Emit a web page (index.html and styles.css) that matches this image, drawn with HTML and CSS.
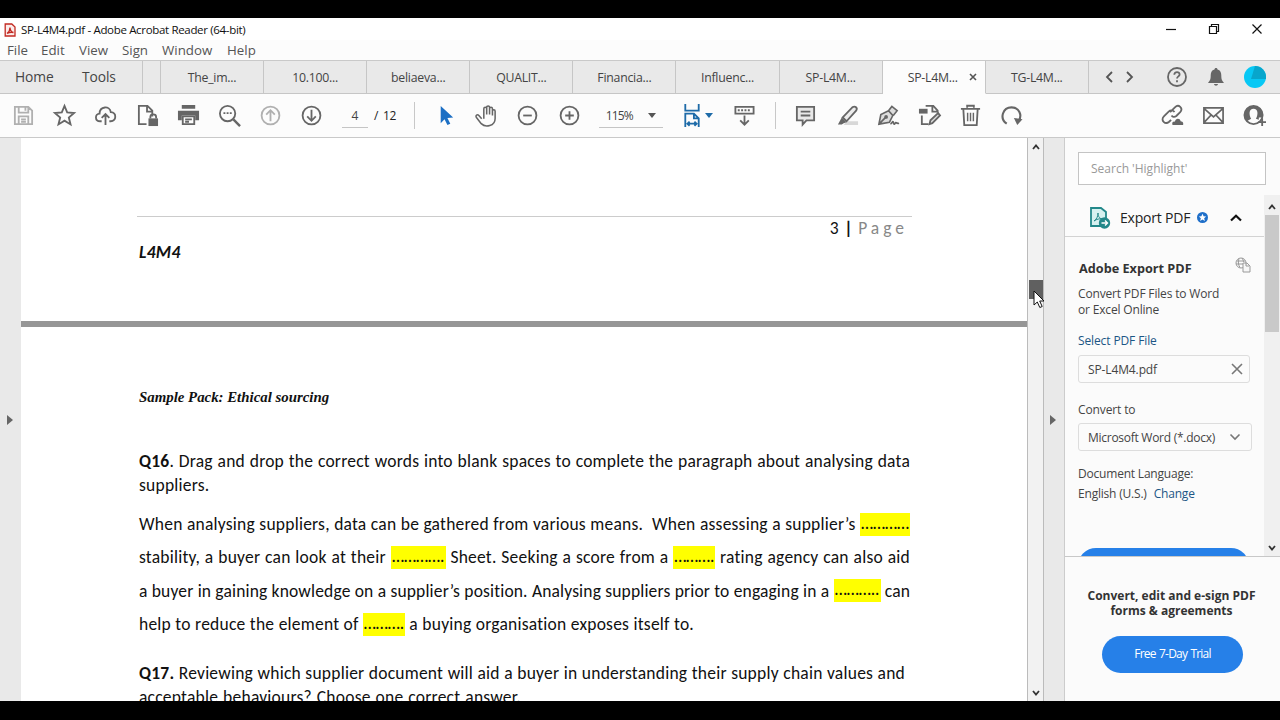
FILE: index.html
```
<!DOCTYPE html>
<html lang="en">
<head>
<meta charset="utf-8">
<title>SP-L4M4.pdf - Adobe Acrobat Reader (64-bit)</title>
<link rel="stylesheet" href="styles.css">
</head>
<body>
<div class="window">
  <header class="titlebar">
    <svg class="app-icon" viewBox="0 0 12 14"><path d="M1.200 1h6.600L11 4v9H1.200z" fill="#fbeceb" stroke="#c22a22" stroke-width="1.300"/><path d="M3 10.500c2-1.500 3-4 3-6 .2 3 1.500 4.500 3.500 5-2-.5-4.500-.2-6.500 1z" fill="none" stroke="#c22a22" stroke-width="1.300"/></svg>
    <span class="app-title">SP-L4M4.pdf - Adobe Acrobat Reader (64-bit)</span>
    <div class="controls">
      <svg viewBox="0 0 12 12"><path d="M1 6.500h10"/></svg>
      <svg viewBox="0 0 12 12"><path d="M1.500 3.500h7v7h-7zM3.500 3.500v-2h7v7h-2"/></svg>
      <svg viewBox="0 0 12 12"><path d="M1.500 1.500l9 9M10.500 1.500l-9 9"/></svg>
    </div>
  </header>
  <nav class="menubar"><span class="m1">File</span><span class="m2">Edit</span><span class="m3">View</span><span class="m4">Sign</span><span class="m5">Window</span><span>Help</span></nav>
  <div class="tabs">
    <div class="home">Home</div><div class="tools">Tools</div><div class="spacer"></div>
    <div class="tab">The_im...</div><div class="tab">10.100...</div><div class="tab">beliaeva...</div><div class="tab">QUALIT...</div><div class="tab">Financia...</div><div class="tab">Influenc...</div><div class="tab">SP-L4M...</div>
    <div class="tab active">SP-L4M...<svg class="tab-close" viewBox="0 0 8 8"><path d="M1 1l6 6M7 1L1 7"/></svg></div>
    <div class="tab">TG-L4M...</div>
    <div class="tab-tools">
      <svg class="arrows" viewBox="0 0 30 14"><path d="M8 2L3 7l5 5M23 2l5 5-5 5"/></svg>
      <svg class="help" viewBox="0 0 22 22"><circle cx="11" cy="11" r="9"/><path d="M8.300 8.800c0-3.800 5.600-3.400 5.300-.2-.2 1.700-2.600 1.900-2.600 4M11 14.300v2"/></svg>
      <svg class="bell" viewBox="0 0 18 20"><path d="M9 1c1 0 1.500.6 1.500 1.500 3 .8 3.800 3 3.800 6 0 4 .7 5 2.700 7.500H1c2-2.500 2.700-3.500 2.700-7.500 0-3 .8-5.200 3.800-6C7.500 1.600 8 1 9 1zM7 17h4c-.3 2.300-3.700 2.300-4 0z"/></svg>
      <svg class="avatar" viewBox="0 0 22 22"><circle cx="11" cy="11" r="11" fill="#07c8f5"/><path d="M11 0a11 11 0 0 1 11 11v2L7 13z" fill="#08a6cc"/></svg>
    </div>
  </div>
  <div class="toolbar">
    <div class="cell pale"><svg viewBox="0 0 24 24"><path d="M3 3h14l4 4v14H3zM7 3v6h10V3M14 4v3M7 21v-8h10v8M9.500 16h5M9.500 18.500h5"/></svg></div>
    <div class="cell"><svg viewBox="0 0 24 24"><path d="M12 2l2.800 6.800 7.200.6-5.500 4.700 1.800 7.200-6.300-3.900-6.300 3.900 1.800-7.200L2 9.400l7.200-.6z"/></svg></div>
    <div class="cell"><svg viewBox="0 0 24 24"><path d="M8 18H6.500C.5 18 .8 10 5.800 10 6 2 16.500 1.500 17.500 8.500c6.500.5 6 9.500 0 9.500H16M12 22V11M8 14.500l4-4 4 4"/></svg></div>
    <div class="cell"><svg viewBox="0 0 24 24"><path d="M11 21H3V2h9l5 5v6M11.500 2v6H17"/><path class="solid" d="M13 15h10v8H13z"/><path d="M15 15v-1.500c0-3.500 6-3.500 6 0V15"/></svg></div>
    <div class="cell"><svg viewBox="0 0 24 24"><path class="solid" d="M5 1h14v4H5zM1 7h22v10h-4v-5H5v5H1z"/><path d="M6 13h12v8H6zM8.500 16h7M8.500 18.500h4"/></svg></div>
    <div class="cell"><svg viewBox="0 0 24 24"><circle cx="10" cy="10" r="8"/><path d="M16 16l7 7" stroke-width="2.500"/><path d="M5.700 9.500h2M9 9.500h2M12.300 9.500h2"/></svg></div>
    <div class="cell pale"><svg viewBox="0 0 24 24"><circle cx="12" cy="12" r="9.300"/><path d="M12 18V7M7.500 11L12 6.500l4.500 4.500"/></svg></div>
    <div class="cell"><svg viewBox="0 0 24 24"><circle cx="12" cy="12" r="9.300"/><path d="M12 6v11M7.500 13l4.500 4.500 4.500-4.500"/></svg></div>
    <div class="page-no">4</div><div class="page-total">/&nbsp; 12</div>
    <div class="rule"></div>
    <div class="cell first"><svg viewBox="0 0 24 24"><path d="M7 2v18l4-4 3 6 3-1.500-3-6 6-.5z" fill="#1c6fc4" stroke="none"/></svg></div>
    <div class="cell"><svg viewBox="0 0 24 24"><path stroke-width="1.600" d="M7 15.500L4 12c-1.500-1.700-4 .1-2.500 2l5 6.500C11 25 21 23 21 15V7.500c0-2-2.800-2-2.800 0V12 5c0-2-3-2-3 0v6V3.500c0-2-3-2-3 0V11 5c0-2-3-2-3 0v10.500"/></svg></div>
    <div class="cell"><svg viewBox="0 0 24 24"><circle cx="12" cy="12" r="9.300"/><path d="M7.500 12h9"/></svg></div>
    <div class="cell"><svg viewBox="0 0 24 24"><circle cx="12" cy="12" r="9.300"/><path d="M7.500 12h9M12 7.500v9"/></svg></div>
    <div class="zoom"><span>115%</span><i class="caret"></i></div>
    <div class="fit-width"><svg viewBox="0 0 18 24"><path d="M2 0v7h14V0M2 24V10h9l5 5v9M11 10v5h5M4.500 20.500h9M6.500 18.300l-2.300 2.200 2.300 2.200M11.500 18.300l2.300 2.200-2.300 2.200"/></svg><i class="caret blue"></i></div>
    <div class="cell scroll"><svg viewBox="0 0 24 24"><path d="M2.500 3h19v7h-19zM12 12v9M7.500 17l4.500 4.500 4.500-4.500"/><path d="M5 6.500h14" stroke-dasharray="2 1.500"/></svg></div>
    <div class="rule r2"></div>
    <div class="cell comment"><svg viewBox="0 0 24 24"><path fill="#e8e8e8" d="M3 3h18v14h-8l-4 4.500V17H3zM7 8h10M7 12h10"/></svg></div>
    <div class="cell"><svg viewBox="0 0 24 24"><path d="M11 18h12v4H8z" fill="#d8d8d8" stroke="none"/><path fill="#ececec" d="M7 14L17 3.500c3-2 6 .5 4 3.500L11 18z"/><path class="solid" d="M6 14l5 5-3 1-2 1.500H2z"/></svg></div>
    <div class="cell"><svg viewBox="0 0 24 24"><path fill="#ddd" stroke-width="1.700" d="M2 21l2-10 8-4 4.500 5-3.500 7zM2 21l7-7M12 7l3.500-4.500L21 7l-4 5"/><circle cx="9.500" cy="13.500" r="1" /><path stroke-width="1.700" d="M14 21c2-1 2.500-4 3-2s1 3 2 1 1 1 4 0"/></svg></div>
    <div class="cell"><svg viewBox="0 0 24 24"><path d="M8 2h8l4.500 5v2M15 2v6h5M4 12v9h7"/><path class="solid" d="M1 5h9v5H1z"/><path fill="#ddd" d="M12 21l1-4 8-7.500 2 2.500-8 8z"/></svg></div>
    <div class="cell"><svg viewBox="0 0 24 24"><path d="M2 5h20M8.500 4V1.800h7V4M4.500 5l1 17h13l1-17"/><path stroke-width="1.500" d="M9 9v9M12 9v9M15 9v9"/></svg></div>
    <div class="cell"><svg viewBox="0 0 24 24"><path d="M7 20.500C-1 15 3 3.500 12 3.500c8 0 11.500 8 7.500 14" stroke-width="2.200"/><path class="solid" d="M14.500 14.500l9 1.500-5.500 6z"/></svg></div>
    <div class="right-tools">
      <div class="cell"><svg viewBox="0 0 24 24"><path d="M9.500 8.500l5-5c4-4 9 1 5.500 5l-4 4c-2 1.500-4 1-5-.5M14 8.500c-1-2-4-2.500-6-.5l-5 5c-4 4 1.500 9 5.500 5.500l2-2"/><path class="solid" d="M12 22c-1-3 1-4 2.500-3.500C15 14.500 20 14.500 20.500 18c3 0 3 3 2.500 4z"/></svg></div>
      <div class="cell"><svg viewBox="0 0 24 24"><path stroke-width="1.800" d="M2 4h20v16H2zM2 4.500l10 9 10-9M2 19.500l7.500-8M22 19.500l-7.500-8"/></svg></div>
      <div class="cell"><svg viewBox="0 0 24 24"><circle cx="11" cy="11.500" r="9.500"/><path class="solid" d="M11 2a9.500 9.500 0 0 0-7 16l4.500-2.500C6 11 6 5 11 5s5 6 2.500 10.500l3 1V14H20a9 9 0 0 0-9-12z"/><path d="M20 15v8M16 19h8"/></svg></div>
    </div>
  </div>
  <main class="content">
    <div class="left-strip"><i class="tri"></i></div>
    <div class="document">
      <section class="page-end">
        <div class="footer-rule"></div>
        <div class="page-label">3 <b>|</b> <span>Page</span></div>
        <div class="code">L4M4</div>
      </section>
      <section class="page-start">
        <h1>Sample Pack: Ethical sourcing</h1>
        <p class="question"><span class="line"><b>Q16</b>. Drag and drop the correct words into blank spaces to complete the paragraph about analysing data</span><span>suppliers.</span></p>
        <p class="passage">
          <span class="line">When analysing suppliers, data can be gathered from various means. &nbsp;When assessing a supplier’s <mark class="k50">…………</mark></span>
          <span class="line">stability, a buyer can look at their <mark class="k55">………….</mark> Sheet. Seeking a score from a <mark class="k42">……….</mark> rating agency can also aid</span>
          <span class="line tight">a buyer in gaining knowledge on a supplier’s position. Analysing suppliers prior to engaging in a <mark class="k47">………..</mark> can</span>
          <span class="line w555">help to reduce the element of <mark class="k42">……….</mark> a buying organisation exposes itself to.</span>
        </p>
        <p class="question q17"><span class="line w766"><b>Q17.</b> Reviewing which supplier document will aid a buyer in understanding their supply chain values and</span><span class="line w382">acceptable behaviours? Choose one correct answer.</span></p>
      </section>
    </div>
    <div class="doc-scroll">
      <svg viewBox="0 0 10 10"><path d="M2 7l3-3.500L8 7"/></svg>
      <div class="thumb"><svg class="pointer" viewBox="0 0 12 19"><path d="M1 1v14l3.300-3 2.500 5.500 2.400-1L6.700 11H11z" fill="#fff" stroke="#111"/></svg></div>
      <svg viewBox="0 0 10 10"><path d="M2 3l3 3.500L8 3"/></svg>
    </div>
    <div class="right-strip"><i class="tri"></i></div>
    <aside class="panel">
      <div class="search">Search 'Highlight'</div>
      <div class="export-area">
        <div class="export-body">
          <div class="export-head">
            <svg class="export-icon" viewBox="0 0 22 24"><path d="M2 2h10l5 4v14H2z" fill="#d6f1f0" stroke="#23888a" stroke-width="1.800"/><path d="M5 15c3-2 4-5 4-8 0 4 2 6 5 6-4-.5-6 0-9 2z" fill="none" stroke="#23888a"/><circle cx="15.500" cy="17" r="5.700" fill="#23888a"/><path d="M12.500 17h5.500M16 14.500l2.500 2.500-2.500 2.500" fill="none" stroke="#fff" stroke-width="1.400"/></svg>
            <span>Export PDF</span>
            <svg class="badge" viewBox="0 0 12 12"><circle cx="6" cy="6" r="6" fill="#1f6fc9"/><path d="M6 2l1.200 2.700 2.800.2-2.200 1.900.8 2.900L6 8.200 3.400 9.700l.8-2.900L2 4.900l2.800-.2z" fill="#fff"/></svg>
            <svg class="chev" viewBox="0 0 12 8"><path d="M1 6.500L6 1.800l5 4.700"/></svg>
          </div>
          <div class="export-form">
            <div class="form-title"><b>Adobe Export PDF</b><svg viewBox="0 0 16 16"><circle cx="6" cy="6" r="5"/><path d="M2 4h8M1 7h7M4 1.500c-1 3-1 6 1 9M7 1c1 1.500 1.500 3 1.500 4"/><path fill="#f7f7f7" d="M8 6h4l3 3v6H8zM11 6v3h3"/></svg></div>
            <div class="desc">Convert PDF Files to Word<br>or Excel Online</div>
            <div class="link select">Select PDF File</div>
            <div class="box file"><span>SP-L4M4.pdf</span><svg viewBox="0 0 12 12"><path d="M1 1l10 10M11 1L1 11"/></svg></div>
            <div class="label">Convert to</div>
            <div class="box drop"><span>Microsoft Word (*.docx)</span><svg viewBox="0 0 12 12"><path d="M1.500 3.500L6 8l4.500-4.500"/></svg></div>
            <div class="lang">Document Language:</div>
            <div class="lang2"><span>English (U.S.)</span><span class="link">Change</span></div>
            <div class="convert"></div>
          </div>
        </div>
        <div class="panel-scroll">
          <svg viewBox="0 0 10 10"><path d="M2 7l3-3.500L8 7"/></svg>
          <div class="panel-thumb"></div>
          <svg viewBox="0 0 10 10"><path d="M2 3l3 3.500L8 3"/></svg>
        </div>
      </div>
      <div class="promo"><b>Convert, edit and e-sign PDF<br>forms &amp; agreements</b><div class="trial">Free 7-Day Trial</div></div>
    </aside>
  </main>
</div>
</body>
</html>
```
FILE: styles.css
```
* { box-sizing: border-box; }
body { margin: 0; background: #000; font-family: "Open Sans", "Noto Sans", sans-serif; color: #444; }
.window { width: 1280px; height: 720px; border-top: 18px solid #000; border-bottom: 19px solid #000; background: #fff; overflow: hidden; display: flex; flex-direction: column; }
svg { display: block; flex: none; fill: none; overflow: visible; }

.titlebar { height: 22px; display: flex; align-items: center; padding: 1px 17px 0 4px; color: #111; }
.app-icon { width: 12px; height: 14px; }
.app-title { margin-left: 5px; font-size: 11.500px; letter-spacing: -0.33px; white-space: nowrap; }
.controls { margin-left: auto; display: flex; gap: 31px; }
.controls svg { width: 12px; height: 12px; stroke: #111; stroke-width: 1.200; margin-top: -2px; }
.menubar { height: 20px; padding-left: 7px; display: flex; align-items: center; font-size: 13.300px; background: #fcfcfc; color: #555; }
.m1 { width: 34px; }
.m2 { width: 38px; }
.m3 { width: 43px; }
.m4 { width: 40px; }
.m5 { width: 65px; }

.tabs { height: 34px; display: flex; background: #e9e9e9; font-size: 12.300px; letter-spacing: -0.25px; line-height: 33px; color: #444; border-top: 1px solid #c9c9c9; }
.tabs > div { border-bottom: 1px solid #c6c6c6; }
.home, .tools { font-size: 13.800px; letter-spacing: -0.1px; line-height: 32px; }
.home { width: 82px; padding-left: 15px; }
.tools { width: 61px; border-right: 1px solid #c6c6c6; }
.spacer { width: 18px; border-right: 1px solid #c6c6c6; }
.tab { width: 103.100px; text-align: center; border-right: 1px solid #c6c6c6; }
.tabs > .active { background: #fcfcfc; border-bottom-color: #fcfcfc; position: relative; padding-right: 2px; }
.tab-close { position: absolute; width: 8px; height: 8px; right: 8px; top: 12px; stroke: #555; stroke-width: 1.600; }
.tab-tools { flex: 1; display: flex; align-items: center; padding-left: 15px; }
.arrows { width: 30px; height: 14px; stroke: #555; stroke-width: 1.800; }
.help { width: 22px; height: 22px; margin-left: 32px; stroke: #666; stroke-width: 1.800; }
.tab-tools .bell { width: 18px; height: 20px; margin-left: 19px; fill: #666; }
.avatar { width: 22px; height: 22px; margin-left: 19px; }

.toolbar { height: 44px; display: flex; align-items: center; background: #fcfcfc; border-bottom: 1px solid #c9c9c9; padding-left: 3px; }
.cell { width: 41.200px; flex: none; display: flex; justify-content: center; }
.cell svg { width: 23px; height: 23px; stroke: #666; stroke-width: 1.900; }
.cell .solid { fill: #666; stroke: none; }
.cell.pale svg { stroke: #b0b0b0; }
.page-no { width: 26px; height: 25px; margin-left: 9.400px; border-bottom: 1px solid #c5c5c5; font-size: 12px; line-height: 25px; text-align: center; }
.page-total { font-size: 12px; letter-spacing: -0.5px; margin-left: 6px; width: 32px; height: 25px; line-height: 25px; color: #222; white-space: nowrap; }
.rule { width: 1px; height: 27px; background: #c8c8c8; margin-left: 8px; }
.first { margin-left: 10px; }
.zoom { width: 64px; height: 25px; border-bottom: 1px solid #c5c5c5; margin-left: 9px; display: flex; align-items: center; justify-content: space-between; padding: 0 7px; font-size: 12px; letter-spacing: -0.8px; }
.caret { border: 4px solid transparent; border-top: 5px solid #555; border-bottom: 0; }
.caret.blue { border-top-color: #1e6ba8; }
.fit-width { display: flex; gap: 4px; align-items: center; margin-left: 20px; }
.fit-width svg { width: 18px; height: 23px; stroke: #1e6ba8; stroke-width: 1.900; }
.scroll { margin-left: 11px; }
.r2 { margin-left: 10px; }
.comment { margin-left: 9.500px; }
.right-tools { display: flex; margin-left: auto; padding-right: 5px; }

.content { flex: 1; min-height: 0; display: flex; }
.left-strip { width: 21px; background: #e9e9e9; display: flex; align-items: center; padding-left: 7px; }
.tri { border: 5px solid transparent; border-left: 6px solid #666; border-right: 0; }
.document { width: 1006px; overflow: hidden; color: #111; font-family: Carlito, Lato, sans-serif; background: #fff; font-variant-ligatures: none; }
.page-end { height: 189px; border-bottom: 6px solid #969696; padding: 78px 115px 0 116px; }
.footer-rule { height: 1px; background: #ccc; }
.page-label { text-align: right; font-size: 17.500px; line-height: 22px; padding-right: 4px; letter-spacing: 0.8px; }
.page-label span { color: #888; letter-spacing: 4px; }
.code { font: italic bold 17.500px/20px Carlito, sans-serif; padding-left: 2px; margin-top: 3px; letter-spacing: 0.3px; }
.page-start { padding: 60px 0 0 118px; }
h1 { margin: 0; font: italic bold 14.850px/20px "Liberation Serif", serif; }
p { margin: 0; font-size: 17.500px; letter-spacing: 0.22px; }
.question { margin-top: 42px; line-height: 24px; }
.question span, .passage span { display: block; white-space: nowrap; }
.line { width: 771px; text-align: justify; text-align-last: justify; }
.passage { margin-top: 11px; line-height: 33.300px; }
.passage .tight { letter-spacing: 0.15px; }
.line.w555 { width: 555px; }
.line.w766 { width: 766px; }
.line.w382 { width: 382px; }
.q17 { margin-top: 20px; }
mark { display: inline-block; height: 23px; line-height: 21px; background: #ff0; color: #111; overflow: hidden; vertical-align: middle; margin-top: -3px; text-align: center; text-align-last: center; letter-spacing: -0.1px; }
.k50 { width: 50px; }
.k55 { width: 55px; }
.k42 { width: 42px; }
.k47 { width: 47px; }

.doc-scroll { width: 17px; background: #f2f2f2; border: solid #bbb; border-width: 0 1px; display: flex; flex-direction: column; align-items: center; padding: 4px 0 3px; }
.doc-scroll > svg, .panel-scroll > svg { width: 10px; height: 10px; stroke: #333; stroke-width: 1.800; }
.thumb { width: 14px; height: 19px; background: #606060; margin: 128px 0 auto; position: relative; }
.pointer { position: absolute; left: 4px; top: 10px; width: 12px; height: 19px; }
.right-strip { width: 21px; background: #e9e9e9; border-right: 1px solid #ccc; display: flex; align-items: center; padding-left: 6px; }
.panel { flex: 1; background: #fbfbfb; display: flex; flex-direction: column; font-size: 12px; letter-spacing: -0.12px; }
.search { height: 33px; margin: 14px 14px 0 13px; border: 1px solid #c4c4c4; background: #fff; padding-left: 12px; line-height: 32px; color: #999; letter-spacing: 0; }
.export-area { height: 362px; margin-top: 10px; display: flex; border-bottom: 1px solid #c8c8c8; }
.export-body { width: 199px; overflow: hidden; }
.export-head { height: 42px; padding: 4px 0 0 24px; border-bottom: 1px solid #d3d3d3; display: flex; align-items: center; font-size: 14px; letter-spacing: -0.2px; color: #222; }
.export-icon { width: 22px; height: 24px; margin-right: 9px; }
.badge { width: 11px; height: 11px; margin-left: 7px; }
.chev { width: 12px; height: 8px; margin-left: 22px; stroke: #111; stroke-width: 2.200; }
.export-form { padding: 21px 0 0 13px; white-space: nowrap; }
.form-title { display: flex; justify-content: space-between; padding: 0 13px 0 1px; line-height: 20px; font-size: 12.700px; color: #333; letter-spacing: 0; }
.form-title svg { width: 16px; height: 16px; stroke: #999; margin-top: -1px; }
.desc { line-height: 16px; margin-top: 8px; letter-spacing: -0.17px; }
.link { color: #1c5685; }
.select { line-height: 20px; margin-top: 13px; }
.box { height: 28px; border: 1px solid #ddd; border-radius: 3px; display: flex; align-items: center; justify-content: space-between; padding: 0 6px 0 9px; }
.file { width: 172px; margin-top: 4px; }
.box svg { width: 12px; height: 12px; stroke: #777; stroke-width: 1.600; }
.label { line-height: 20px; margin-top: 17px; }
.drop { width: 174px; margin-top: 3px; padding-right: 10px; letter-spacing: -0.27px; }
.lang { line-height: 20px; margin-top: 13px; letter-spacing: -0.2px; }
.lang2 { line-height: 20px; display: flex; gap: 7px; letter-spacing: -0.2px; }
.convert { width: 171px; height: 37px; margin-top: 44px; border-radius: 18px; background: #2680e8; }
.panel-scroll { width: 16px; background: #f0f0f0; display: flex; flex-direction: column; align-items: center; padding: 7px 0 3px; }
.panel-thumb { width: 14px; height: 117px; background: #c9c9c9; margin: 3px 0 auto; }
.promo { text-align: center; line-height: 14.500px; color: #333; padding: 32px 2px 0 0; display: flex; flex-direction: column; align-items: center; font-size: 12px; letter-spacing: 0; }
.trial { width: 141px; height: 37px; margin: 18px 0 0 2px; line-height: 36px; border-radius: 19px; background: #2680e8; color: #fff; letter-spacing: -0.8px; font-size: 12px; word-spacing: 1px; }
```
